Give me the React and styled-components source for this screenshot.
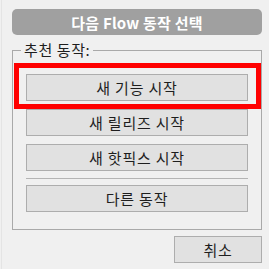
import React from "react";
import styled, { createGlobalStyle } from "styled-components";

const Global = createGlobalStyle`
  html, body { margin: 0; padding: 0; background: #f0f0f0; }
  body { font-family: "Noto Sans CJK KR", "Noto Sans", sans-serif; }
`;

const Page = styled.div`
  width: 269px;
  height: 269px;
  box-sizing: border-box;
  padding: 9px 8px 0 10px;
  margin-left: 1px;
  border-left: 1px solid #e4e4e4;
  display: flex;
  flex-direction: column;
`;

const Header = styled.div`
  height: 26px;
  width: 250px;
  background: #a0a0a0;
  border-radius: 5px;
  color: #fff;
  font-weight: 700;
  font-size: 15px;
  display: flex;
  align-items: center;
  justify-content: center;
  letter-spacing: 0.2px;
`;

const Group = styled.div`
  position: relative;
  margin-top: 15px;
  width: 250px;
  box-sizing: border-box;
  border: 1px solid #a9a9a9;
  padding: 23px 12px 17px 13px;
  display: flex;
  flex-direction: column;
  gap: 8px;
`;

const Legend = styled.span`
  position: absolute;
  top: -11px;
  left: 8px;
  padding: 0 3px;
  background: #f0f0f0;
  font-size: 15px;
  line-height: 20px;
  color: #1e1e1e;
  letter-spacing: 0.6px;
`;

const Button = styled.button`
  height: 27px;
  width: ${(p) => p.$w || "222px"};
  box-sizing: border-box;
  background: #e1e1e1;
  border: 1px solid #adadad;
  border-radius: 0;
  padding: 0;
  font-family: inherit;
  font-size: 15px;
  color: #1e1e1e;
  letter-spacing: 0.8px;
  display: flex;
  align-items: center;
  justify-content: center;
`;

const Separator = styled.div`
  height: 1px;
  width: 222px;
  background: #b4b4b4;
  margin: -1px 0 -2px;
`;

const Highlight = styled.div`
  position: absolute;
  left: 1px;
  top: 12px;
  width: 247px;
  height: 46px;
  box-sizing: border-box;
  border: 5px solid #ff0000;
  pointer-events: none;
`;

const Footer = styled.div`
  margin-top: 6px;
  width: 250px;
  display: flex;
  justify-content: flex-end;
`;

export default function App() {
  return (
    <>
      <Global />
      <Page>
        <Header>다음 Flow 동작 선택</Header>
        <Group>
          <Legend>추천 동작:</Legend>
          <Button>새 기능 시작</Button>
          <Button>새 릴리즈 시작</Button>
          <Button>새 핫픽스 시작</Button>
          <Separator />
          <Button>다른 동작</Button>
          <Highlight />
        </Group>
        <Footer>
          <Button $w="88px">취소</Button>
        </Footer>
      </Page>
    </>
  );
}
